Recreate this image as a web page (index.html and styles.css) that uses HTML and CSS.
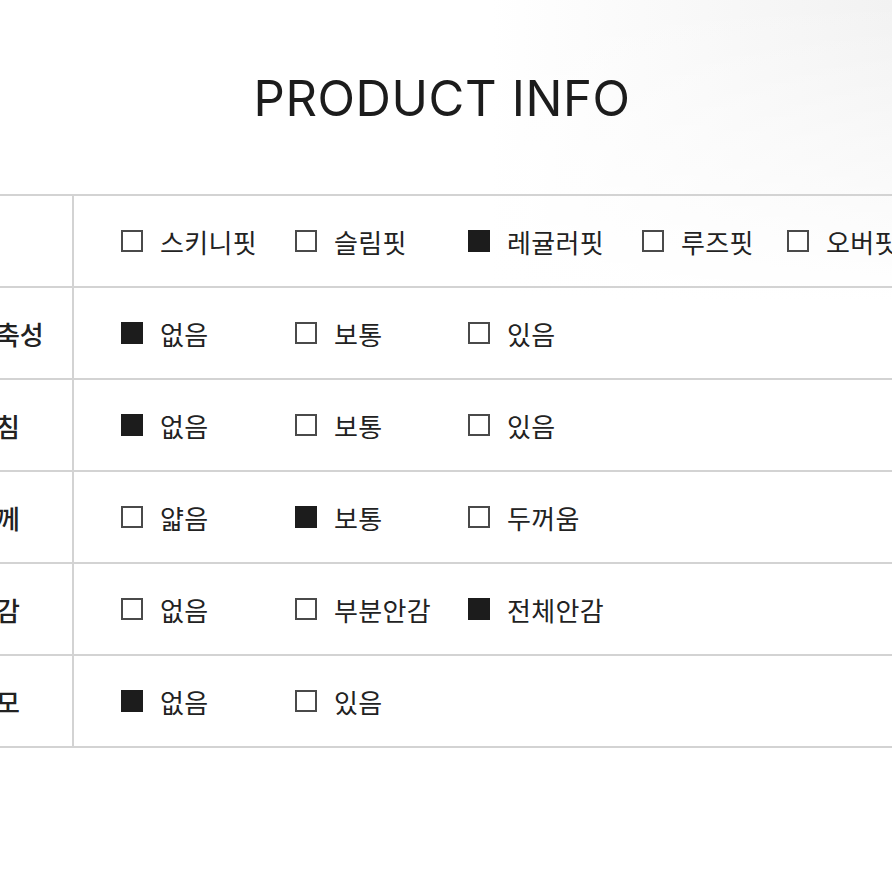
FILE: index.html
```html
<!DOCTYPE html>
<html lang="ko">
<head>
<meta charset="utf-8">
<title>Product Info</title>
<link rel="stylesheet" href="styles.css">
</head>
<body>
<div class="page">
  <h1 class="title">PRODUCT INFO</h1>
  <div class="table">
    <div class="row">
      <div class="label">핏</div>
      <div class="values">
        <span class="opt"><i class="box"></i>스키니핏</span>
        <span class="opt"><i class="box"></i>슬림핏</span>
        <span class="opt"><i class="box on"></i>레귤러핏</span>
        <span class="opt"><i class="box"></i>루즈핏</span>
        <span class="opt"><i class="box"></i>오버핏</span>
      </div>
    </div>
    <div class="row">
      <div class="label">신축성</div>
      <div class="values">
        <span class="opt"><i class="box on"></i>없음</span>
        <span class="opt"><i class="box"></i>보통</span>
        <span class="opt"><i class="box"></i>있음</span>
      </div>
    </div>
    <div class="row">
      <div class="label">비침</div>
      <div class="values">
        <span class="opt"><i class="box on"></i>없음</span>
        <span class="opt"><i class="box"></i>보통</span>
        <span class="opt"><i class="box"></i>있음</span>
      </div>
    </div>
    <div class="row">
      <div class="label">두께</div>
      <div class="values">
        <span class="opt"><i class="box"></i>얇음</span>
        <span class="opt"><i class="box on"></i>보통</span>
        <span class="opt"><i class="box"></i>두꺼움</span>
      </div>
    </div>
    <div class="row">
      <div class="label">안감</div>
      <div class="values">
        <span class="opt"><i class="box"></i>없음</span>
        <span class="opt"><i class="box"></i>부분안감</span>
        <span class="opt"><i class="box on"></i>전체안감</span>
      </div>
    </div>
    <div class="row">
      <div class="label">기모</div>
      <div class="values">
        <span class="opt"><i class="box on"></i>없음</span>
        <span class="opt"><i class="box"></i>있음</span>
      </div>
    </div>
  </div>
</div>
</body>
</html>
```
FILE: styles.css
```css
* { box-sizing: border-box; }
html, body {
  margin: 0;
  padding: 0;
  height: 100%;
}
body {
  background:
    linear-gradient(to bottom, rgba(255,255,255,0) 0%, #ffffff 300px),
    linear-gradient(to right, #ffffff 0%, #ffffff 55%, #fafafa 72%, #f2f2f2 100%);
  font-family: "Noto Sans CJK KR", "Noto Sans", sans-serif;
  color: #222222;
  overflow: hidden;
}
.page {
  padding-top: 70px;
}
.title {
  margin: 0;
  font-family: Inter, "Noto Sans", sans-serif;
  font-weight: 400;
  font-size: 49px;
  line-height: 58px;
  letter-spacing: 0.6px;
  text-align: center;
  padding-right: 8px;
  color: #1c1c1c;
}
.table {
  margin-top: 66px;
  margin-left: -60px;
  width: 1100px;
  border-top: 2px solid #d3d3d3;
}
.row {
  display: flex;
  height: 92px;
  border-bottom: 2px solid #d3d3d3;
}
.label {
  width: 134px;
  flex: none;
  padding-left: 32px;
  display: flex;
  align-items: center;
  font-size: 26px;
  font-weight: 500;
  border-right: 2px solid #d3d3d3;
  color: #222;
}
.values {
  flex: 1;
  display: grid;
  grid-template-columns: 174px 173px 174px 145px auto;
  align-items: center;
  padding-left: 47px;
  font-size: 26px;
  letter-spacing: 0.3px;
}
.opt {
  display: flex;
  align-items: center;
  white-space: nowrap;
}
.box {
  width: 22px;
  height: 22px;
  border: 2px solid #4a4a4a;
  background: #fff;
  margin-right: 17px;
  flex: none;
}
.box.on {
  background: #1c1c1c;
  border-color: #1c1c1c;
}
```
